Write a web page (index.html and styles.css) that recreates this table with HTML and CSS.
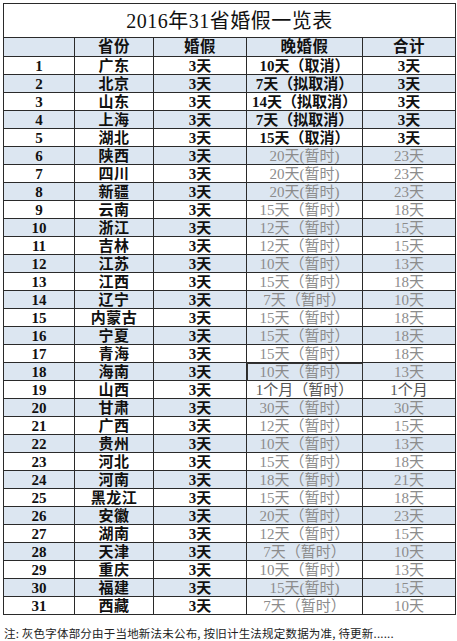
FILE: index.html
```html
<!DOCTYPE html>
<html lang="zh">
<head>
<meta charset="utf-8">
<title>2016年31省婚假一览表</title>
<link rel="stylesheet" href="styles.css">
</head>
<body>
<table class="sheet">
  <colgroup>
    <col class="c-no"><col class="c-prov"><col class="c-leave"><col class="c-late"><col class="c-total">
  </colgroup>
  <thead>
    <tr class="title-row"><th colspan="5">2016年31省婚假一览表</th></tr>
    <tr class="head-row"><th></th><th>省份</th><th>婚假</th><th>晚婚假</th><th>合计</th></tr>
  </thead>
  <tbody>
    <tr><td class="no">1</td><td class="prov">广东</td><td class="leave">3天</td><td class="dark">10天（取消）</td><td class="dark">3天</td></tr>
    <tr><td class="no">2</td><td class="prov">北京</td><td class="leave">3天</td><td class="dark">7天（拟取消）</td><td class="dark">3天</td></tr>
    <tr><td class="no">3</td><td class="prov">山东</td><td class="leave">3天</td><td class="dark">14天（拟取消）</td><td class="dark">3天</td></tr>
    <tr><td class="no">4</td><td class="prov">上海</td><td class="leave">3天</td><td class="dark">7天（拟取消）</td><td class="dark">3天</td></tr>
    <tr><td class="no">5</td><td class="prov">湖北</td><td class="leave">3天</td><td class="dark">15天（取消）</td><td class="dark">3天</td></tr>
    <tr><td class="no">6</td><td class="prov">陕西</td><td class="leave">3天</td><td class="gray">20天(暂时)</td><td class="gray">23天</td></tr>
    <tr><td class="no">7</td><td class="prov">四川</td><td class="leave">3天</td><td class="gray">20天(暂时)</td><td class="gray">23天</td></tr>
    <tr><td class="no">8</td><td class="prov">新疆</td><td class="leave">3天</td><td class="gray">20天(暂时)</td><td class="gray">23天</td></tr>
    <tr><td class="no">9</td><td class="prov">云南</td><td class="leave">3天</td><td class="gray">15天（暂时）</td><td class="gray">18天</td></tr>
    <tr><td class="no">10</td><td class="prov">浙江</td><td class="leave">3天</td><td class="gray">12天（暂时）</td><td class="gray">15天</td></tr>
    <tr><td class="no">11</td><td class="prov">吉林</td><td class="leave">3天</td><td class="gray">12天（暂时）</td><td class="gray">15天</td></tr>
    <tr><td class="no">12</td><td class="prov">江苏</td><td class="leave">3天</td><td class="gray">10天（暂时）</td><td class="gray">13天</td></tr>
    <tr><td class="no">13</td><td class="prov">江西</td><td class="leave">3天</td><td class="gray">15天（暂时）</td><td class="gray">18天</td></tr>
    <tr><td class="no">14</td><td class="prov">辽宁</td><td class="leave">3天</td><td class="gray">7天（暂时）</td><td class="gray">10天</td></tr>
    <tr><td class="no">15</td><td class="prov">内蒙古</td><td class="leave">3天</td><td class="gray">15天（暂时）</td><td class="gray">18天</td></tr>
    <tr><td class="no">16</td><td class="prov">宁夏</td><td class="leave">3天</td><td class="gray">15天（暂时）</td><td class="gray">18天</td></tr>
    <tr><td class="no">17</td><td class="prov">青海</td><td class="leave">3天</td><td class="gray">15天（暂时）</td><td class="gray">18天</td></tr>
    <tr><td class="no">18</td><td class="prov">海南</td><td class="leave">3天</td><td class="gray selected">10天（暂时）</td><td class="gray">13天</td></tr>
    <tr><td class="no">19</td><td class="prov">山西</td><td class="leave">3天</td><td class="mid">1个月（暂时）</td><td class="mid">1个月</td></tr>
    <tr><td class="no">20</td><td class="prov">甘肃</td><td class="leave">3天</td><td class="gray">30天（暂时）</td><td class="gray">30天</td></tr>
    <tr><td class="no">21</td><td class="prov">广西</td><td class="leave">3天</td><td class="gray">12天（暂时）</td><td class="gray">15天</td></tr>
    <tr><td class="no">22</td><td class="prov">贵州</td><td class="leave">3天</td><td class="gray">10天（暂时）</td><td class="gray">13天</td></tr>
    <tr><td class="no">23</td><td class="prov">河北</td><td class="leave">3天</td><td class="gray">15天（暂时）</td><td class="gray">18天</td></tr>
    <tr><td class="no">24</td><td class="prov">河南</td><td class="leave">3天</td><td class="gray">18天（暂时）</td><td class="gray">21天</td></tr>
    <tr><td class="no">25</td><td class="prov">黑龙江</td><td class="leave">3天</td><td class="gray">15天（暂时）</td><td class="gray">18天</td></tr>
    <tr><td class="no">26</td><td class="prov">安徽</td><td class="leave">3天</td><td class="gray">20天（暂时）</td><td class="gray">23天</td></tr>
    <tr><td class="no">27</td><td class="prov">湖南</td><td class="leave">3天</td><td class="gray">12天（暂时）</td><td class="gray">15天</td></tr>
    <tr><td class="no">28</td><td class="prov">天津</td><td class="leave">3天</td><td class="gray">7天（暂时）</td><td class="gray">10天</td></tr>
    <tr><td class="no">29</td><td class="prov">重庆</td><td class="leave">3天</td><td class="gray">10天（暂时）</td><td class="gray">13天</td></tr>
    <tr><td class="no">30</td><td class="prov">福建</td><td class="leave">3天</td><td class="gray">15天(暂时)</td><td class="gray">15天</td></tr>
    <tr><td class="no">31</td><td class="prov">西藏</td><td class="leave">3天</td><td class="gray">7天（暂时）</td><td class="gray">10天</td></tr>
  </tbody>
</table>
<p class="note">注: 灰色字体部分由于当地新法未公布, 按旧计生法规定数据为准, 待更新......</p>
</body>
</html>
```

FILE: styles.css
```css
html, body {
  margin: 0;
  padding: 0;
  background: #ffffff;
}

body {
  padding: 3px 0 0 3px;
  font-family: "Liberation Serif", "Noto Sans CJK SC", serif;
  color: #111;
}

.sheet {
  border-collapse: collapse;
  table-layout: fixed;
  width: 452px;
  border: 1px solid #222;
}

.c-no { width: 71px; }
.c-prov { width: 79px; }
.c-leave { width: 93px; }
.c-late { width: 116px; }
.c-total { width: 93px; }

.sheet th,
.sheet td {
  border: 1px solid #2a2a2a;
  padding: 0;
  text-align: center;
  vertical-align: middle;
  white-space: nowrap;
  overflow: hidden;
  line-height: 16px;
}

.title-row th {
  height: 33px;
  font-size: 20px;
  font-weight: normal;
  background: #ffffff;
  letter-spacing: 0.5px;
}

.head-row th {
  height: 18px;
  font-size: 15.5px;
  font-weight: bold;
  background: #dce6f1;
  letter-spacing: 0.5px;
}

.sheet tbody td {
  height: 17px;
  font-size: 15px;
}

.sheet tbody tr:nth-child(even) td {
  background: #dce6f1;
}

.no {
  font-weight: bold;
}

.prov {
  font-weight: bold;
  letter-spacing: 0.5px;
}

.leave {
  font-weight: bold;
}

.dark {
  font-weight: bold;
  color: #111;
}

.gray {
  color: #8c8c8c;
}

.mid {
  color: #555;
}

.sheet td.selected {
  outline: 1.5px solid #333;
  outline-offset: -1px;
}

.note {
  margin: 10px 0 0 1px;
  font-family: "Noto Sans CJK SC", sans-serif;
  font-size: 11.5px;
  color: #222;
  letter-spacing: 0.2px;
}
```
